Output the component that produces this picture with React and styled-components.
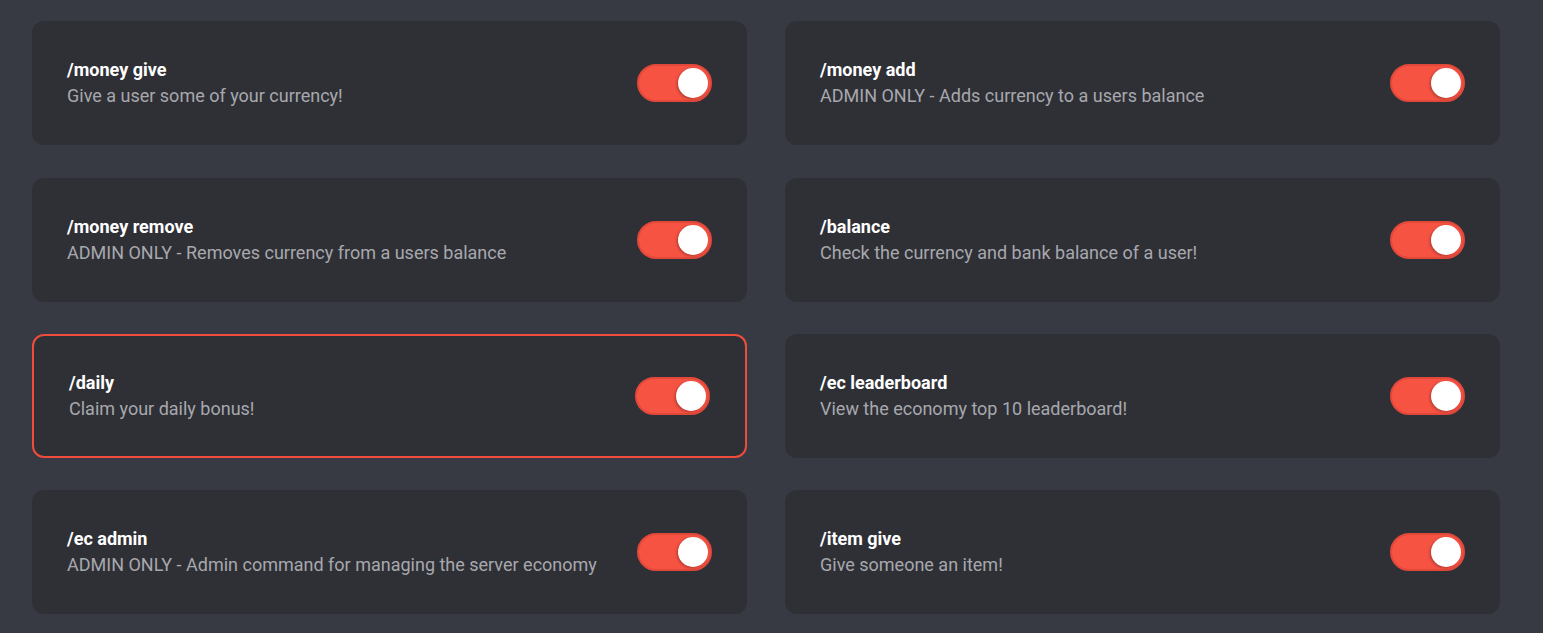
import React, { useState } from 'react';
import styled, { createGlobalStyle } from 'styled-components';

const GlobalStyle = createGlobalStyle`
  html, body {
    margin: 0;
    padding: 0;
    background: #373a43;
  }
  body {
    font-family: Roboto, "Liberation Sans", sans-serif;
  }
`

const Page = styled.div`
  display: grid;
  grid-template-columns: 715px 715px;
  grid-auto-rows: 124px;
  column-gap: 38px;
  row-gap: 32.3px;
  padding: 21.3px 43px 19px 32px;
  background: #373a43;
  min-height: 633px;
  box-sizing: border-box;
`

const Card = styled.div`
  box-sizing: border-box;
  display: flex;
  align-items: center;
  justify-content: space-between;
  padding: 0 35px;
  background: #2f3036;
  border-radius: 12px;
  border: ${p => (p.$active ? '2px solid #f04b3d' : 'none')};
  cursor: pointer;
`

const Info = styled.div`
  display: flex;
  flex-direction: column;
  gap: 4px;
`

const Title = styled.div`
  color: #ffffff;
  font-weight: 700;
  font-size: 18px;
  line-height: 22px;
`

const Desc = styled.div`
  color: #a7a8ad;
  font-size: 18px;
  line-height: 22px;
`

const Track = styled.button`
  position: relative;
  flex: none;
  width: 75px;
  height: 38px;
  padding: 0;
  border: 2px solid #e2483a;
  border-radius: 19px;
  background: ${p => (p.$on ? '#f65343' : '#5a5c63')};
  cursor: pointer;
`

const Knob = styled.span`
  position: absolute;
  top: 2px;
  left: ${p => (p.$on ? '39px' : '2px')};
  width: 30px;
  height: 30px;
  border-radius: 50%;
  background: #ffffff;
  box-shadow: -1px 1px 3px rgba(0, 0, 0, 0.3);
  transition: left 0.15s;
`

const commands = [
  ['/money give', 'Give a user some of your currency!'],
  ['/money add', 'ADMIN ONLY - Adds currency to a users balance'],
  ['/money remove', 'ADMIN ONLY - Removes currency from a users balance'],
  ['/balance', 'Check the currency and bank balance of a user!'],
  ['/daily', 'Claim your daily bonus!'],
  ['/ec leaderboard', 'View the economy top 10 leaderboard!'],
  ['/ec admin', 'ADMIN ONLY - Admin command for managing the server economy'],
  ['/item give', 'Give someone an item!'],
]

export default function App () {
  const [active, setActive] = useState('/daily')
  const [enabled, setEnabled] = useState(() => Object.fromEntries(commands.map(c => [c[0], true])))

  return (
    <>
      <GlobalStyle />
      <Page>
        {commands.map(([name, desc]) => (
          <Card key={name} $active={active === name} onClick={() => setActive(name)}>
            <Info>
              <Title>{name}</Title>
              <Desc>{desc}</Desc>
            </Info>
            <Track
              $on={enabled[name]}
              onClick={e => {
                e.stopPropagation()
                setEnabled({ ...enabled, [name]: !enabled[name] })
              }}
            >
              <Knob $on={enabled[name]} />
            </Track>
          </Card>
        ))}
      </Page>
    </>
  )
}
